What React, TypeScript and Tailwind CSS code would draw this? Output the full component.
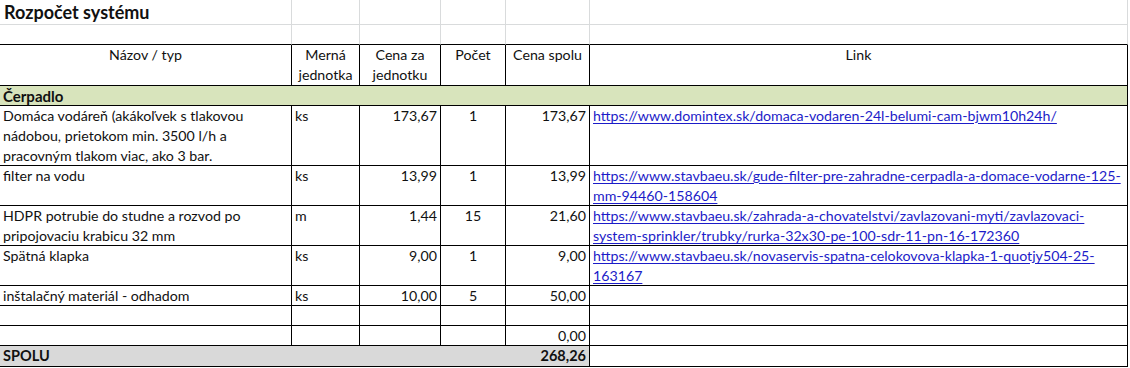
import React from "react";

const font = { fontFamily: "Lato, 'Liberation Sans', sans-serif" };

// excel-like cell, right + bottom border
function Cell({
  children,
  className = "",
}: {
  children?: React.ReactNode;
  className?: string;
}) {
  return (
    <div
      className={`border-r border-b border-black px-[3px] leading-[20px] whitespace-nowrap overflow-hidden ${className}`}
    >
      {children}
    </div>
  );
}

function Grid({ children, className = "" }: { children?: React.ReactNode; className?: string }) {
  return (
    <div className={`border-r border-b border-[#d9dbdc] ${className}`}>{children}</div>
  );
}

function Url({ lines }: { lines: string[] }) {
  return (
    <div className="text-[#1c1cc8]">
      {lines.map((l) => (
        <div key={l}>
          <span className="underline underline-offset-2">{l}</span>
        </div>
      ))}
    </div>
  );
}

const rows = [
  {
    name: ["Domáca vodáreň (akákoľvek s tlakovou", "nádobou, prietokom min. 3500 l/h a", "pracovným tlakom viac, ako 3 bar."],
    unit: "ks",
    price: "173,67",
    qty: "1",
    total: "173,67",
    link: ["https://www.domintex.sk/domaca-vodaren-24l-belumi-cam-bjwm10h24h/"],
  },
  {
    name: ["filter na vodu"],
    unit: "ks",
    price: "13,99",
    qty: "1",
    total: "13,99",
    link: ["https://www.stavbaeu.sk/gude-filter-pre-zahradne-cerpadla-a-domace-vodarne-125-", "mm-94460-158604"],
  },
  {
    name: ["HDPR potrubie do studne a rozvod po", "pripojovaciu krabicu 32 mm"],
    unit: "m",
    price: "1,44",
    qty: "15",
    total: "21,60",
    link: [
      "https://www.stavbaeu.sk/zahrada-a-chovatelstvi/zavlazovani-myti/zavlazovaci-",
      "system-sprinkler/trubky/rurka-32x30-pe-100-sdr-11-pn-16-172360",
    ],
  },
  {
    name: ["Spätná klapka"],
    unit: "ks",
    price: "9,00",
    qty: "1",
    total: "9,00",
    link: ["https://www.stavbaeu.sk/novaservis-spatna-celokovova-klapka-1-quotjy504-25-", "163167"],
  },
  {
    name: ["inštalačný materiál - odhadom"],
    unit: "ks",
    price: "10,00",
    qty: "5",
    total: "50,00",
    link: [],
  },
  { name: [], unit: "", price: "", qty: "", total: "", link: [] },
  { name: [], unit: "", price: "", qty: "", total: "0,00", link: [] },
];

export default function App() {
  return (
    <div className="w-[1130px] h-[368px] bg-white overflow-hidden text-[#111]" style={font}>
      <div className="grid grid-cols-[292px_68px_81px_65px_84px_538px] grid-rows-[25px_20px_41px_20px_60px_40px_40px_40px_20px_20px_20px_21px] text-[14.2px]">
        {/* title */}
        <Grid className="flex items-end pl-[4px] pb-[1px]">
          <span className="font-bold text-[18px] leading-[22px]">Rozpočet systému</span>
        </Grid>
        <Grid />
        <Grid />
        <Grid />
        <Grid />
        <Grid />

        {/* empty row, black bottom = table top */}
        <Grid className="border-b-black" />
        <Grid className="border-b-black" />
        <Grid className="border-b-black" />
        <Grid className="border-b-black" />
        <Grid className="border-b-black" />
        <Grid className="border-b-black" />

        {/* header */}
        <Cell className="text-center">Názov / typ</Cell>
        <Cell className="text-center">
          Merná
          <br />
          jednotka
        </Cell>
        <Cell className="text-center">
          Cena za
          <br />
          jednotku
        </Cell>
        <Cell className="text-center">Počet</Cell>
        <Cell className="text-center">Cena spolu</Cell>
        <Cell className="text-center">Link</Cell>

        {/* section */}
        <Cell className="col-span-6 bg-[#d8e4bc] font-bold text-[15px]">Čerpadlo</Cell>

        {rows.map((r, i) => (
          <React.Fragment key={i}>
            <Cell>
              {r.name.map((n) => (
                <div key={n}>{n}</div>
              ))}
            </Cell>
            <Cell>{r.unit}</Cell>
            <Cell className="text-right">{r.price}</Cell>
            <Cell className="text-center">{r.qty}</Cell>
            <Cell className="text-right">{r.total}</Cell>
            <Cell>
              <Url lines={r.link} />
            </Cell>
          </React.Fragment>
        ))}

        {/* total */}
        <Cell className="col-span-5 bg-[#d9d9d9] font-bold flex justify-between text-[14.5px]">
          <span>SPOLU</span>
          <span>268,26</span>
        </Cell>
        <Cell />
      </div>
    </div>
  );
}
